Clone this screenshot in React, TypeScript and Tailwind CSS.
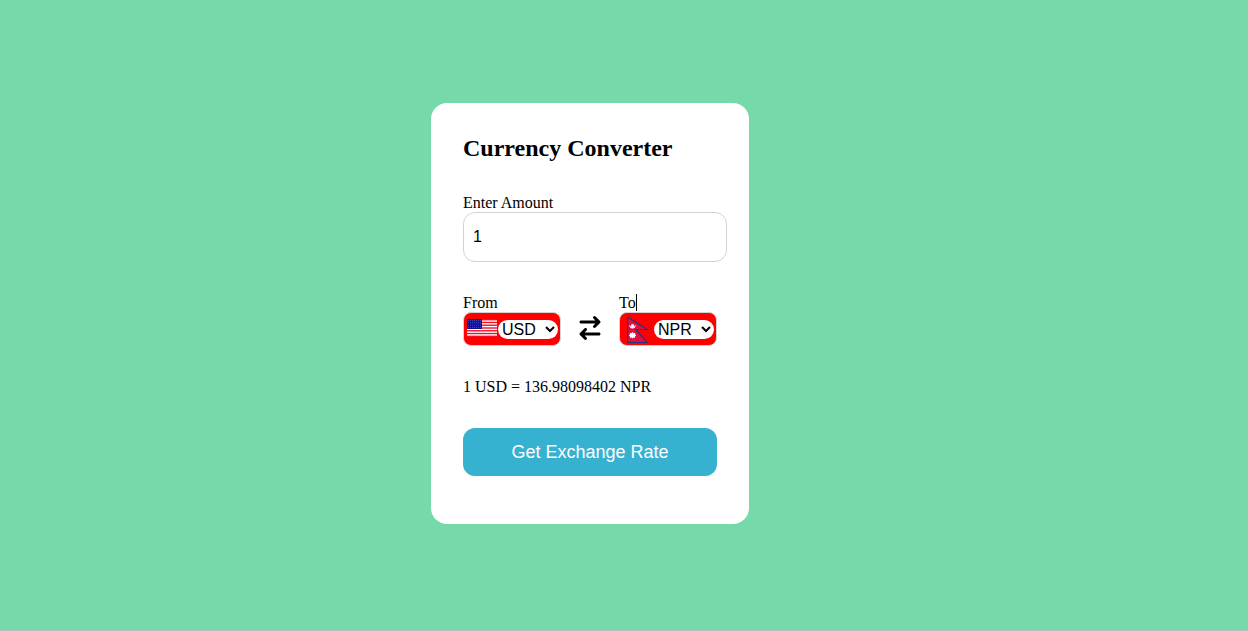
import { useState } from "react";
import { FaArrowRightArrowLeft } from "react-icons/fa6";

const STRIPES = [0, 2, 4, 6, 8, 10, 12];
const STAR_ROWS = [0, 1, 2, 3];
const STAR_COLUMNS = [0, 1, 2, 3, 4, 5, 6];

function UsFlag() {
  return (
    <svg viewBox="0 0 30 30" className="size-[30px] shrink-0" aria-hidden="true">
      <rect y="5" width="30" height="18" fill="#fff" />
      {STRIPES.map((i) => (
        <rect key={i} y={5 + (i * 18) / 13} width="30" height={18 / 13} fill="#f50f26" />
      ))}
      <rect y="5" width="15" height="10" fill="#10109a" />
      {STAR_ROWS.map((r) =>
        STAR_COLUMNS.map((c) => (
          <circle key={`${r}-${c}`} cx={1.5 + c * 2} cy={6.5 + r * 2.3} r="0.45" fill="#7f8be0" />
        )),
      )}
    </svg>
  );
}

function NepalFlag() {
  return (
    <svg viewBox="0 0 30 30" className="size-[30px] shrink-0" aria-hidden="true">
      <path d="M4.6 3 L24 15.5 H12.8 L24 28.4 H4.6 Z" fill="#e2103e" stroke="#263680" strokeWidth="1.2" />
      <path d="M6.2 11 Q9.5 15.2 12.8 11 Q12.6 14.4 9.5 14.4 Q6.4 14.4 6.2 11 Z" fill="#fff" />
      <circle cx="9.5" cy="11.6" r="1.6" fill="#fff" />
      <path
        d="M9.5 18 L10.5 19.2 L12.1 18.8 L12.1 20.4 L13.2 21.3 L12.1 22.2 L12.1 23.8 L10.5 23.4 L9.5 24.6 L8.5 23.4 L6.9 23.8 L6.9 22.2 L5.8 21.3 L6.9 20.4 L6.9 18.8 L8.5 19.2 Z"
        fill="#fff"
      />
    </svg>
  );
}

const fieldBox =
  "flex h-[34px] w-[98px] items-center justify-between rounded-lg border border-[#d3d3d3] bg-[#ff0000] pl-[3px] pr-0.5";
const selectStyle =
  "h-[19px] w-[60px] rounded-[10px] bg-white font-['Liberation_Sans',Arial,sans-serif] text-base leading-[19px] text-black outline-none";

export default function App() {
  const [amount, setAmount] = useState("1");
  const [from, setFrom] = useState("USD");
  const [to, setTo] = useState("NPR");

  return (
    <main className="flex min-h-screen items-center justify-center border-b border-[#bdbdbd] bg-[#75d9aa] pr-[68px] pb-[3px] font-['Liberation_Serif','Times_New_Roman',serif] text-base leading-[18px] text-black">
      <form
        className="flex w-[318px] flex-col gap-8 rounded-2xl bg-white px-8 pt-8 pb-12"
        onSubmit={(e) => e.preventDefault()}
      >
        <h2 className="text-2xl leading-[27px] font-bold">Currency Converter</h2>

        <div className="flex flex-col">
          <label htmlFor="amount">Enter Amount</label>
          <input
            id="amount"
            type="text"
            value={amount}
            onChange={(e) => setAmount(e.target.value)}
            className="-mr-2.5 h-[50px] rounded-xl border border-[#d3d3d3] bg-white px-[9px] font-['Liberation_Sans',Arial,sans-serif] text-base outline-none"
          />
        </div>

        <div className="flex items-end justify-between">
          <div className="flex flex-col">
            <label htmlFor="from">From</label>
            <div className={fieldBox}>
              <UsFlag />
              <select id="from" value={from} onChange={(e) => setFrom(e.target.value)} className={selectStyle}>
                <option value="USD">USD</option>
                <option value="NPR">NPR</option>
              </select>
            </div>
          </div>

          <FaArrowRightArrowLeft className="mb-1.5 size-6" aria-hidden="true" />

          <div className="flex flex-col">
            <div className="flex">
              <label htmlFor="to">To</label>
              <span className="h-[17px] w-px bg-black" />
            </div>
            <div className={fieldBox}>
              <NepalFlag />
              <select id="to" value={to} onChange={(e) => setTo(e.target.value)} className={selectStyle}>
                <option value="USD">USD</option>
                <option value="NPR">NPR</option>
              </select>
            </div>
          </div>
        </div>

        <p>1 USD = 136.98098402 NPR</p>

        <button
          type="submit"
          className="h-12 cursor-pointer rounded-xl bg-[#37b1d0] font-['Liberation_Sans',Arial,sans-serif] text-lg text-white"
        >
          Get Exchange Rate
        </button>
      </form>
    </main>
  );
}
